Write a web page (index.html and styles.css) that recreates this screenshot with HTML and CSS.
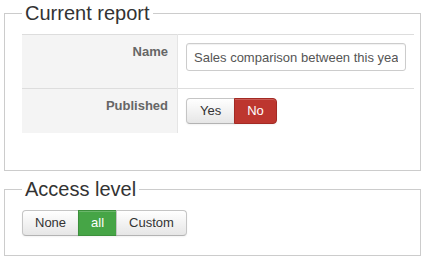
FILE: index.html
```html
<!DOCTYPE html>
<html>
	<head>
		<meta charset="UTF-8">
		<title>Report</title>
		<link rel="stylesheet" href="styles.css">
	</head>
	<body>
		<fieldset class="group first">
			<legend>Current report</legend>
			<table class="form-table">
				<tr>
					<th>Name</th>
					<td><input class="text" type="text" value="Sales comparison between this year and last year"></td>
				</tr>
				<tr class="last">
					<th>Published</th>
					<td>
						<div class="btn-group">
							<span class="btn btn-yes">Yes</span><span class="btn btn-danger">No</span>
						</div>
					</td>
				</tr>
			</table>
		</fieldset>
		<fieldset class="group">
			<legend>Access level</legend>
			<div class="btn-group">
				<span class="btn">None</span><span class="btn btn-success">all</span><span class="btn">Custom</span>
			</div>
		</fieldset>
	</body>
</html>
```
FILE: styles.css
```css
*{
	box-sizing: border-box;
}
body{
	margin: 0 4px;
	font-family: "Liberation Sans", Arial, sans-serif;
	font-size: 13px;
	line-height: 18px;
	color: #333;
	background: #fff;
}
.group{
	border: 1px solid #ccc;
	margin: 0 0 7px 0;
	padding: 8px 6px 19px 17px;
}
.group legend{
	font-size: 20px;
	line-height: 26px;
	padding: 0 3px;
	color: #333;
}
.first{
	padding-bottom: 37px;
	margin-bottom: 5px;
}
.form-table{
	width: 100%;
	border-collapse: collapse;
}
.form-table th,
.form-table td{
	border-top: 1px solid #ddd;
	padding: 8px;
	vertical-align: top;
	text-align: left;
}
.form-table th{
	width: 159px;
	background: #f4f4f4;
	border-right: 1px solid #e5e5e5;
	color: #666;
	font-weight: bold;
	text-align: right;
	padding-right: 9px;
}
.form-table td{
	padding-bottom: 8px;
}
.last td{
	padding-top: 9px;
	padding-bottom: 9px;
}
.text{
	display: block;
	width: 220px;
	height: 28px;
	margin: 0 0 9px 0;
	padding: 4px 7px;
	border: 1px solid #ccc;
	border-radius: 3px;
	font-family: inherit;
	font-size: 13px;
	color: #555;
	box-shadow: inset 0 1px 1px rgba(0,0,0,0.06);
}
.btn-group{
	display: flex;
}
.btn{
	display: inline-block;
	padding: 3px 12px;
	line-height: 18px;
	border: 1px solid #c5c5c5;
	border-bottom-color: #b3b3b3;
	background: linear-gradient(#ffffff, #e6e6e6);
	color: #333;
	text-align: center;
	box-shadow: inset 0 1px 0 rgba(255,255,255,0.2), 0 1px 2px rgba(0,0,0,0.05);
}
.btn + .btn{
	margin-left: -1px;
}
.btn:first-child{
	border-radius: 4px 0 0 4px;
}
.btn:last-child{
	border-radius: 0 4px 4px 0;
}
.btn-yes{
	padding-left: 13px;
	padding-right: 13px;
}
.btn-danger{
	background: #bd362f;
	border-color: #a32a24;
	color: #fff;
}
.btn-success{
	background: #46a546;
	border-color: #3c8f3c;
	color: #fff;
}
```
